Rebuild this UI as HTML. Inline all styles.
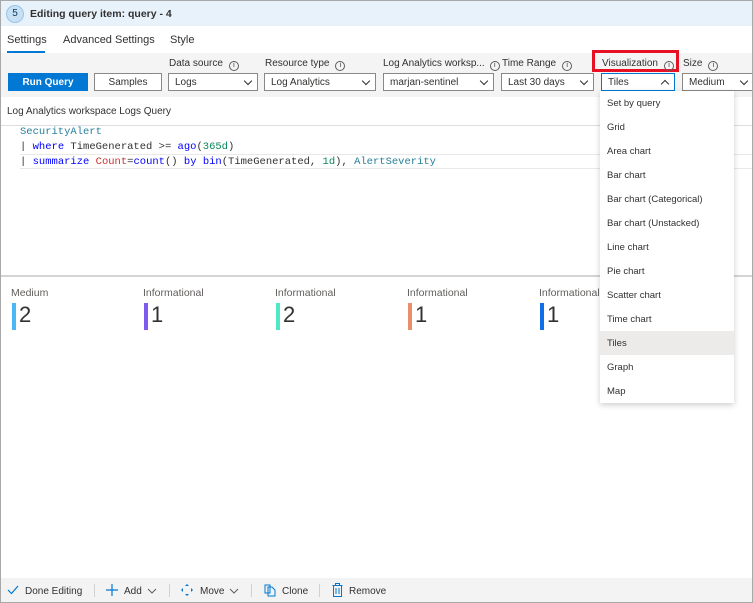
<!DOCTYPE html>
<html><head><style>
*{box-sizing:border-box;margin:0;padding:0}
body{width:753px;height:603px;overflow:hidden;font-family:"Liberation Sans",sans-serif;font-size:10px;color:#323130;background:#fff;position:relative}
.frame{position:absolute;left:0;top:0;width:753px;height:603px;border:1px solid #a8a8a8}
.abs{position:absolute;white-space:nowrap}
.hdr{position:absolute;left:1px;top:1px;width:751px;height:25px;background:#e8f2fb}
.badge{position:absolute;left:5px;top:4px;width:18px;height:18px;border-radius:50%;background:#c7e0f4;border:1px solid #9cc3e5;font-size:10px;text-align:center;line-height:16px;color:#0f3a60}
.band{position:absolute;left:1px;top:53px;width:751px;height:44px;background:#f4f4f4}
.sel{position:absolute;height:18px;border:1px solid #8a8886;background:#fff;font-size:10px;padding-left:6px;line-height:18px}
.chev{position:absolute;right:6px;top:4px;width:6px;height:6px;border-right:1px solid #323130;border-bottom:1px solid #323130;transform:rotate(45deg)}
.info{display:inline-block;width:10px;height:10px;border:1px solid #605e5c;border-radius:50%;font-size:7px;line-height:8px;text-align:center;margin-left:6px;vertical-align:-1px}
.code{font-family:"Liberation Mono",monospace;font-size:10.5px}
.tile{position:absolute;top:287px}
.tile .l{font-size:10.5px;color:#605e5c}
.tile .bar{position:absolute;left:1px;top:16px;width:4px;height:27px}
.tile .n{position:absolute;left:8px;top:15px;font-size:22px;color:#323130}
.menu{position:absolute;left:600px;top:91px;width:134px;height:312px;background:#fff;box-shadow:0 2px 6px rgba(0,0,0,.2)}
.menu div{height:24px;line-height:26px;padding-left:7px;font-size:9.5px}
.foot{position:absolute;left:1px;top:578px;width:751px;height:24px;background:#f3f3f3;font-size:10px}
.foot span{position:absolute;top:8px}
.sep{position:absolute;top:6px;width:1px;height:13px;background:#d0d0d0}
</style></head><body>
<div class="hdr"><div class="badge">5</div><div class="abs" style="left:29px;top:7px;font-size:10.5px;font-weight:bold;color:#323130">Editing query item: query - 4</div></div>
<div class="abs" style="left:7px;top:34px;font-size:11px">Settings</div>
<div class="abs" style="left:7px;top:51px;width:38px;height:2px;background:#0078d4"></div>
<div class="abs" style="left:63px;top:34px;font-size:11px">Advanced Settings</div>
<div class="abs" style="left:170px;top:34px;font-size:11px">Style</div>
<div class="band"></div>
<div class="abs" style="left:8px;top:73px;width:80px;height:18px;background:#0078d4;color:#fff;font-weight:bold;text-align:center;line-height:19px">Run Query</div>
<div class="abs" style="left:94px;top:73px;width:68px;height:18px;border:1px solid #8a8886;background:#fff;text-align:center;line-height:17px">Samples</div>
<div class="abs" style="left:169px;top:58px">Data source<span class="info">i</span></div>
<div class="sel" style="left:168px;top:73px;width:90px">Logs<i class="chev"></i></div>
<div class="abs" style="left:265px;top:58px">Resource type<span class="info">i</span></div>
<div class="sel" style="left:264px;top:73px;width:112px">Log Analytics<i class="chev"></i></div>
<div class="abs" style="left:383px;top:58px">Log Analytics worksp...<span class="info" style="margin-left:5px">i</span></div>
<div class="sel" style="left:383px;top:73px;width:111px">marjan-sentinel<i class="chev"></i></div>
<div class="abs" style="left:502px;top:58px">Time Range<span class="info">i</span></div>
<div class="sel" style="left:501px;top:73px;width:93px">Last 30 days<i class="chev"></i></div>
<div class="abs" style="left:592px;top:50px;width:87px;height:22px;border:3px solid #e81123"></div>
<div class="abs" style="left:602px;top:58px">Visualization<span class="info">i</span></div>
<div class="sel" style="left:601px;top:73px;width:74px;border-color:#0078d4">Tiles<i class="chev" style="transform:rotate(225deg);top:7px"></i></div>
<div class="abs" style="left:683px;top:58px">Size<span class="info">i</span></div>
<div class="sel" style="left:682px;top:73px;width:72px">Medium<i class="chev"></i></div>
<div class="abs" style="left:7px;top:106px">Log Analytics workspace Logs Query</div>
<div class="abs" style="left:1px;top:125px;width:751px;height:1px;background:#ddd"></div>
<div class="abs code" style="left:20px;top:126px;color:#098658"><span style="color:#267f99">SecurityAlert</span></div>
<div class="abs code" style="left:20px;top:141px">| <span style="color:#0000ff">where</span> TimeGenerated &gt;= <span style="color:#0000ff">ago</span>(<span style="color:#098658">365d</span>)</div>
<div class="abs" style="left:20px;top:154px;width:733px;height:15px;border-top:1px solid #e8e8e8;border-bottom:1px solid #e8e8e8"></div>
<div class="abs code" style="left:20px;top:156px">| <span style="color:#0000ff">summarize</span> <span style="color:#c72e2e">Count</span>=<span style="color:#0000ff">count</span>() <span style="color:#0000ff">by</span> <span style="color:#0000ff">bin</span>(TimeGenerated, <span style="color:#098658">1d</span>), <span style="color:#267f99">AlertSeverity</span></div>
<div class="abs" style="left:1px;top:275px;width:751px;height:2px;background:#d4d4d4"></div>
<div class="tile" style="left:11px"><div class="l">Medium</div><div class="bar" style="background:#4bb8f5"></div><div class="n">2</div></div>
<div class="tile" style="left:143px"><div class="l">Informational</div><div class="bar" style="background:#7f5af0"></div><div class="n">1</div></div>
<div class="tile" style="left:275px"><div class="l">Informational</div><div class="bar" style="background:#4ce8c8"></div><div class="n">2</div></div>
<div class="tile" style="left:407px"><div class="l">Informational</div><div class="bar" style="background:#e8906e"></div><div class="n">1</div></div>
<div class="tile" style="left:539px"><div class="l">Informational</div><div class="bar" style="background:#0f6fe8"></div><div class="n">1</div></div>
<div class="menu">
<div>Set by query</div><div>Grid</div><div>Area chart</div><div>Bar chart</div><div>Bar chart (Categorical)</div><div>Bar chart (Unstacked)</div><div>Line chart</div><div>Pie chart</div><div>Scatter chart</div><div>Time chart</div><div style="background:#edebe9">Tiles</div><div>Graph</div><div>Map</div>
</div>
<div class="foot">
<svg class="abs" style="left:6px;top:7px" width="12" height="10"><path d="M1 5 L4.5 8.5 L11 1" stroke="#0078d4" fill="none" stroke-width="1.2"/></svg>
<span style="left:24px">Done Editing</span>
<div class="sep" style="left:93px"></div>
<svg class="abs" style="left:105px;top:6px" width="12" height="12"><path d="M6 0V12M0 6H12" stroke="#0078d4" stroke-width="1.2"/></svg>
<span style="left:123px">Add</span>
<svg class="abs" style="left:146px;top:10px" width="10" height="6"><path d="M1 1L5 5L9 1" stroke="#605e5c" fill="none"/></svg>
<div class="sep" style="left:168px"></div>
<svg class="abs" style="left:180px;top:6px" width="12" height="12"><path d="M6 0L4 2H8ZM6 12L4 10H8ZM0 6L2 4V8ZM12 6L10 4V8Z" fill="#0078d4"/></svg>
<span style="left:199px">Move</span>
<svg class="abs" style="left:228px;top:10px" width="10" height="6"><path d="M1 1L5 5L9 1" stroke="#605e5c" fill="none"/></svg>
<div class="sep" style="left:250px"></div>
<svg class="abs" style="left:263px;top:6px" width="12" height="13"><path d="M1 1H6V9H1ZM4 3H8L11 6V12H4Z" stroke="#0078d4" fill="none"/></svg>
<span style="left:281px">Clone</span>
<div class="sep" style="left:318px"></div>
<svg class="abs" style="left:331px;top:5px" width="11" height="14"><path d="M0.5 2.5H10.5M3.5 2.5V0.5H7.5V2.5M1.5 2.5V13.5H9.5V2.5M4 5V11M7 5V11" stroke="#0078d4" fill="none"/></svg>
<span style="left:348px">Remove</span>
</div>
<div class="frame"></div>
</body></html>
